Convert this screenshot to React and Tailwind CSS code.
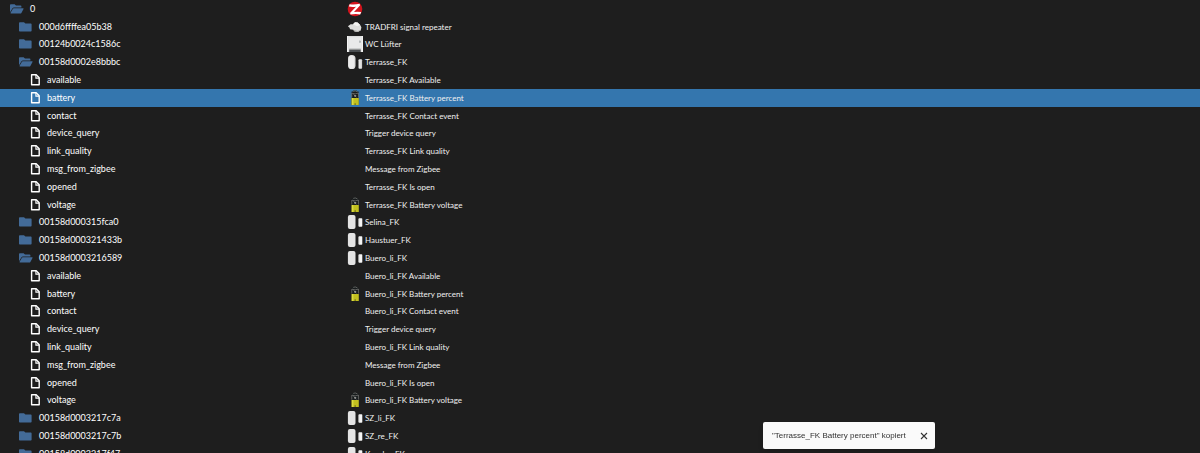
import { useState } from "react";

const sensorStates = (name) => [
  { id: "available", label: `${name} Available` },
  { id: "battery", label: `${name} Battery percent`, icon: "battery" },
  { id: "contact", label: `${name} Contact event` },
  { id: "device_query", label: "Trigger device query" },
  { id: "link_quality", label: `${name} Link quality` },
  { id: "msg_from_zigbee", label: "Message from Zigbee" },
  { id: "opened", label: `${name} Is open` },
  { id: "voltage", label: `${name} Battery voltage`, icon: "battery" },
].map((row) => ({ ...row, kind: "file", key: `${name}.${row.id}` }));

const rows = [
  { id: "0", kind: "root", label: "", icon: "zigbee" },
  { id: "000d6ffffea05b38", kind: "closed", label: "TRADFRI signal repeater", icon: "repeater" },
  { id: "00124b0024c1586c", kind: "closed", label: "WC Lüfter", icon: "module" },
  { id: "00158d0002e8bbbc", kind: "open", label: "Terrasse_FK", icon: "contactRound" },
  ...sensorStates("Terrasse_FK"),
  { id: "00158d000315fca0", kind: "closed", label: "Selina_FK", icon: "contact" },
  { id: "00158d000321433b", kind: "closed", label: "Haustuer_FK", icon: "contact" },
  { id: "00158d0003216589", kind: "open", label: "Buero_li_FK", icon: "contact" },
  ...sensorStates("Buero_li_FK"),
  { id: "00158d0003217c7a", kind: "closed", label: "SZ_li_FK", icon: "contact" },
  { id: "00158d0003217c7b", kind: "closed", label: "SZ_re_FK", icon: "contact" },
  { id: "00158d0003217f47", kind: "closed", label: "Kueche_FK", icon: "contact" },
];

const indent = {
  root: "pl-[10px] gap-[6px]",
  open: "pl-[19px] gap-[6px]",
  closed: "pl-[19px] gap-[6px]",
  file: "pl-[30px] gap-[6px]",
};

function TreeIcon({ kind }) {
  if (kind === "file") {
    return (
      <svg viewBox="0 0 11 12" className="h-[12px] w-[11px] shrink-0" aria-hidden="true">
        <path d="M1.6.8H6.2L9.2 3.8V10.8H1.6Z" fill="none" stroke="#fff" strokeWidth="1.4" strokeLinejoin="round" />
        <path d="M5.9.9V4.1H9" fill="none" stroke="#fff" strokeWidth="1.1" />
      </svg>
    );
  }
  if (kind === "closed") {
    return (
      <svg viewBox="0 0 14 10" className="h-[10px] w-[14px] shrink-0" aria-hidden="true">
        <path d="M.8.2H5L6.4 1.5H11.8Q12.6 1.5 12.6 2.3V8.7Q12.6 9.5 11.8 9.5H.8Q0 9.5 0 8.7V1Q0 .2.8.2Z" fill="#436b98" />
      </svg>
    );
  }
  return (
    <svg viewBox="0 0 14 10" className="h-[10px] w-[14px] shrink-0" aria-hidden="true">
      <path d="M.8.2H4.6L6 1.5H10.6Q11.4 1.5 11.4 2.3V3.5H3.9Q3 3.5 2.5 4.3L0 8.3V1Q0 .2.8.2Z" fill="#436b98" />
      <path d="M3.8 4.2H13.1Q14 4.2 13.5 5L11.4 8.9Q11 9.5 10.3 9.5H1Q.2 9.5.6 8.8L2.9 4.7Q3.2 4.2 3.8 4.2Z" fill="#436b98" />
    </svg>
  );
}

function DeviceIcon({ name }) {
  const box = "h-[16px] w-[16px] shrink-0";
  switch (name) {
    case "zigbee":
      return (
        <svg viewBox="0 0 16 16" className={box} aria-hidden="true">
          <circle cx="8" cy="8" r="7.3" fill="#d3141d" />
          <path d="M2.6 3.2Q7 4.2 12.7 2.8L13 4.5L7 10.9Q10.5 10.5 14.2 10.9L13.2 13.4Q8 12.5 3.7 13.6L3 12L9 5.7Q5 6.2 1.9 5.6Z" fill="#fff" />
        </svg>
      );
    case "repeater":
      return (
        <svg viewBox="0 0 16 16" className={box} aria-hidden="true">
          <path d="M.9 7.2L3.6 5.3L6 5.2L8 3.2L10.6 3.4L13.2 6L14.4 8.3L13.8 11.2L10.8 13L7.6 12.4L6.2 10.8L3 10.2L2.6 8.8Z" fill="#dededc" />
          <path d="M6 5.2L8 3.2L10.6 3.4L13.2 6L10.2 7.2Z" fill="#f3f3f1" />
          <path d="M6.2 10.8L10.8 12L13.9 10.4L13.8 11.2L10.8 13L7.6 12.4Z" fill="#b4b4b1" />
        </svg>
      );
    case "module":
      return (
        <svg viewBox="0 0 16 16" className={box} aria-hidden="true">
          <path d="M0 0H16V16H0Z" fill="#dcdddd" />
          <path d="M2.2 1.2H14V12.5H2.2Z" fill="#e9eaea" />
          <path d="M0 0H1.2V16H0ZM14.6 0H16V16H14.6Z" fill="#f3f3f3" />
          <path d="M12.4 4.6Q14 3.8 13.8 6.2Q13.4 7.2 12.2 6.5Z" fill="#9ca3a5" />
          <path d="M2.2 13.4H13.7V16H2.2Z" fill="#494d50" />
          <path d="M2.2 12.6H13.7V13.4H2.2Z" fill="#aaa" />
        </svg>
      );
    case "contactRound":
      return (
        <svg viewBox="0 0 16 16" className={box} aria-hidden="true">
          <rect x="1" y="1" width="7.5" height="14" rx="3.6" fill="#dcdcdc" />
          <rect x="1.8" y="1.5" width="5.2" height="13" rx="2.6" fill="#ebebeb" />
          <rect x="11.5" y="5.2" width="3.6" height="9.6" rx="1" fill="#e6e6e6" />
          <path d="M14.3 6V14" stroke="#bdbdbd" strokeWidth=".6" />
        </svg>
      );
    case "contact":
      return (
        <svg viewBox="0 0 16 16" className={box} aria-hidden="true">
          <rect x=".9" y="1" width="7.6" height="14" rx="2" fill="#e4e4e4" />
          <rect x="11.5" y="4.2" width="3.8" height="8.6" rx=".8" fill="#f5f5f5" />
          <path d="M12.1 5V12" stroke="#cfcfcf" strokeWidth=".5" />
        </svg>
      );
    case "battery":
      return (
        <svg viewBox="0 0 16 16" className={box} aria-hidden="true">
          <path d="M6.3.6H9.8V1.6H11.6V15H4.6V1.6H6.3Z" fill="#171b1c" />
          <path d="M6.2 1.4Q8.2.3 10.4 1.8M5 3.2Q8.2 4.6 11.3 3.1M4.8 3V7.6M11.4 3V7.6" fill="none" stroke="#8f8f8c" strokeWidth=".6" />
          <path d="M6.7 4.6L9.3 7M7.6 6.6L9.2 5" stroke="#d0d0cb" strokeWidth=".7" />
          <path d="M4.4 8H11.8V15H4.4Z" fill="#c2c01f" />
          <path d="M5 8H6.4V15H5Z" fill="#dddc43" />
          <path d="M7.6 13.2H8.7V15H7.6Z" fill="#6c6b1b" />
        </svg>
      );
    default:
      return <span className={box} />;
  }
}

function Snackbar({ text, onClose }) {
  return (
    <div role="status" className="fixed right-[265px] bottom-[4px] flex h-[27px] w-[172px] items-center justify-between rounded-[2px] bg-[#fafafa] pr-[5px] pl-[9px] font-['Liberation_Sans',sans-serif] text-[8px] text-[#303030] shadow-md">
      <span className="whitespace-nowrap">{text}</span>
      <button type="button" aria-label="Schließen" onClick={onClose} className="flex h-[12px] w-[12px] items-center justify-center">
        <svg viewBox="0 0 8 8" className="h-[8px] w-[8px]" aria-hidden="true">
          <path d="M1 1L7 7M7 1L1 7" stroke="#333" strokeWidth="1.1" />
        </svg>
      </button>
    </div>
  );
}

export default function App() {
  const [selected, setSelected] = useState("Terrasse_FK.battery");
  const [notice, setNotice] = useState(true);

  return (
    <main className="h-screen overflow-hidden bg-[#1e1e1e] font-['Lato','Open_Sans',sans-serif] text-white">
      <table className="h-[463px] w-full table-fixed border-collapse" aria-label="Objekte">
        <colgroup>
          <col className="w-[347px]" />
          <col />
        </colgroup>
        <tbody>
          {rows.map((row) => {
            const key = row.key ?? row.id;
            return (
              <tr
                key={key}
                aria-selected={key === selected}
                onClick={() => setSelected(key)}
                className={key === selected ? "bg-[#3476ae]" : ""}
              >
                <td className="p-0 align-middle">
                  <div className={`flex items-center text-[9px] leading-[16px] ${indent[row.kind]}`}>
                    <TreeIcon kind={row.kind} />
                    <span>{row.id}</span>
                  </div>
                </td>
                <td className="p-0 align-middle">
                  <div className="flex items-center gap-[2px] text-[8px] leading-[16px] text-[#f0f0f0]">
                    <DeviceIcon name={row.icon} />
                    <span>{row.label}</span>
                  </div>
                </td>
              </tr>
            );
          })}
        </tbody>
      </table>
      {notice && <Snackbar text={'"Terrasse_FK Battery percent" kopiert'} onClose={() => setNotice(false)} />}
    </main>
  );
}
